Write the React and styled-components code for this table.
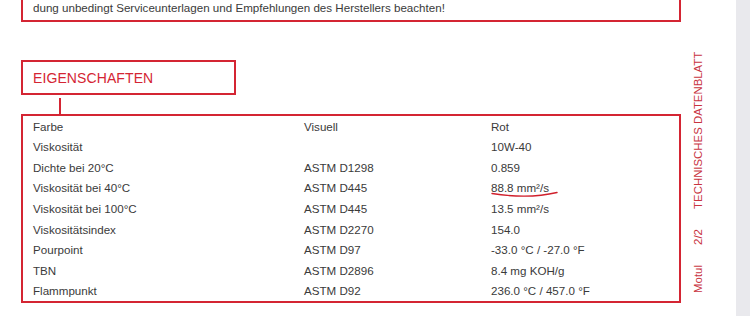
import React from "react";
import styled, { createGlobalStyle } from "styled-components";

const RED = "#d42533";

const Global = createGlobalStyle`
  html, body { margin: 0; padding: 0; background: #ffffff; }
  body { font-family: "Liberation Sans", Arial, sans-serif; color: #3a3a3a; }
`;

const Page = styled.div`
  display: flex;
  width: 750px;
  height: 316px;
  overflow: hidden;
`;

const Sheet = styled.div`
  display: flex;
  width: 736px;
  padding-left: 21px;
  box-sizing: border-box;
  background: #ffffff;
`;

const Scrollbar = styled.div`
  flex: 1;
  background: #e9e9ed;
`;

const Content = styled.div`
  display: flex;
  flex-direction: column;
  width: 660px;
`;

const Notice = styled.div`
  box-sizing: border-box;
  height: 22px;
  border: 2px solid ${RED};
  border-top: none;
  padding: 1px 0 0 10px;
  font-size: 11.6px;
  line-height: 14px;
`;

const SectionTitle = styled.div`
  box-sizing: border-box;
  margin-top: 38px;
  width: 215px;
  height: 35px;
  border: 2px solid ${RED};
  display: flex;
  align-items: center;
  padding-left: 10px;
  color: ${RED};
  font-size: 14px;
  letter-spacing: 0.1px;
`;

const Connector = styled.div`
  margin: 3px 0 0 38px;
  width: 2px;
  height: 16px;
  background: ${RED};
`;

const Table = styled.div`
  box-sizing: border-box;
  height: 189px;
  border: 2px solid ${RED};
  padding-left: 10px;
  display: grid;
  grid-template-columns: 271px 187px 1fr;
  grid-template-rows: repeat(9, 1fr);
  font-size: 11.6px;
`;

const Cell = styled.div`
  position: relative;
  display: flex;
  align-items: center;
  white-space: nowrap;
`;

const Scribble = styled.svg`
  position: absolute;
  left: 0;
  top: 12px;
  width: 70px;
  height: 9px;
  overflow: visible;
`;

const Side = styled.div`
  display: flex;
  align-items: flex-end;
  padding: 0 0 23px 11px;
  height: 316px;
  box-sizing: border-box;
`;

const Vertical = styled.div`
  writing-mode: vertical-rl;
  transform: rotate(180deg);
  display: flex;
  gap: 20px;
  color: #c8343f;
  font-size: 11.4px;
  line-height: 12px;
`;

const rows = [
  ["Farbe", "Visuell", "Rot"],
  ["Viskosität", "", "10W-40"],
  ["Dichte bei 20°C", "ASTM D1298", "0.859"],
  ["Viskosität bei 40°C", "ASTM D445", "88.8 mm²/s", true],
  ["Viskosität bei 100°C", "ASTM D445", "13.5 mm²/s"],
  ["Viskositätsindex", "ASTM D2270", "154.0"],
  ["Pourpoint", "ASTM D97", "-33.0 °C / -27.0 °F"],
  ["TBN", "ASTM D2896", "8.4 mg KOH/g"],
  ["Flammpunkt", "ASTM D92", "236.0 °C / 457.0 °F"],
];

export default function App() {
  return (
    <>
      <Global />
      <Page>
        <Sheet>
          <Content>
            <Notice>dung unbedingt Serviceunterlagen und Empfehlungen des Herstellers beachten!</Notice>
            <SectionTitle>EIGENSCHAFTEN</SectionTitle>
            <Connector />
            <Table>
              {rows.map(([a, b, c, mark]) => (
                <React.Fragment key={a}>
                  <Cell>{a}</Cell>
                  <Cell>{b}</Cell>
                  <Cell>
                    {c}
                    {mark && (
                      <Scribble viewBox="0 0 70 9">
                        <path d="M1 3.5 C 20 6.5, 45 7.5, 66 2.5" fill="none" stroke="#d0202c" strokeWidth="1.4" strokeLinecap="round" />
                      </Scribble>
                    )}
                  </Cell>
                </React.Fragment>
              ))}
            </Table>
          </Content>
          <Side>
            <Vertical>
              <span>Motul</span>
              <span>2/2</span>
              <span>TECHNISCHES DATENBLATT</span>
            </Vertical>
          </Side>
        </Sheet>
        <Scrollbar />
      </Page>
    </>
  );
}
